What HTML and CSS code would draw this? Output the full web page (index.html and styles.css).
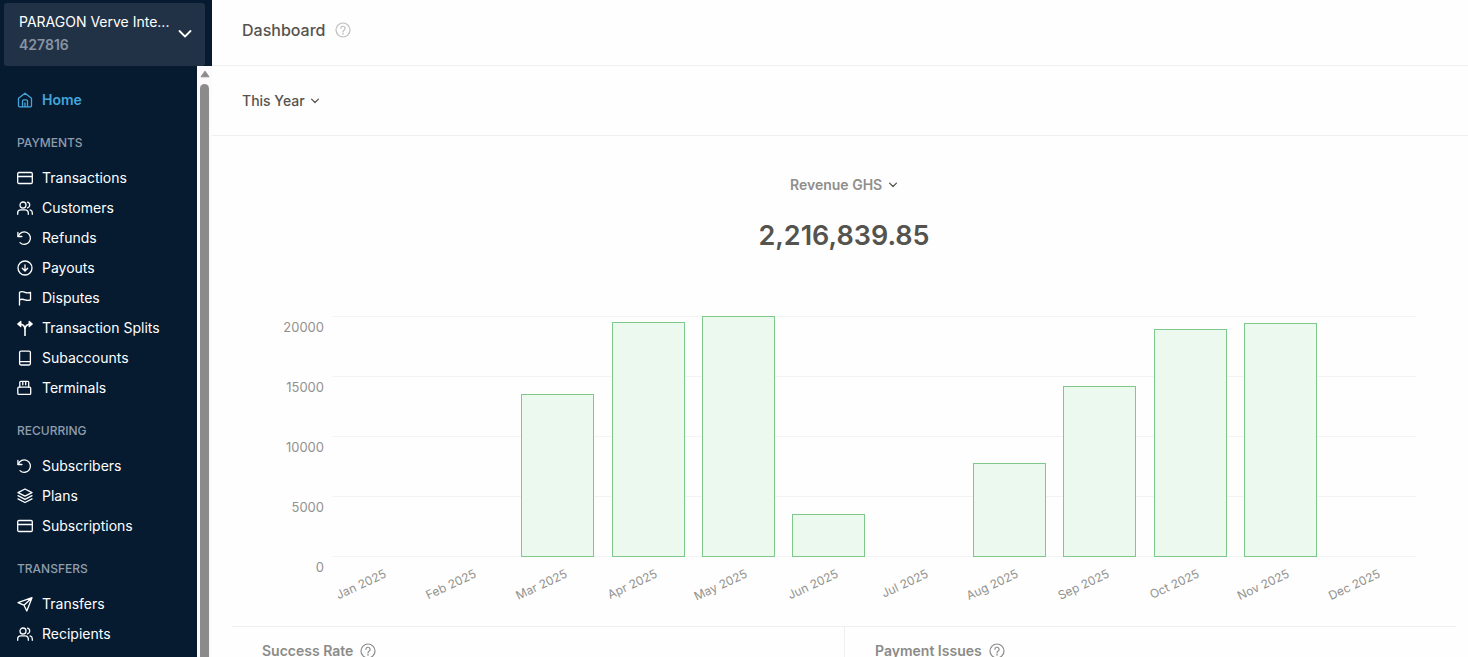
FILE: index.html
```html
<!DOCTYPE html>
<html lang="en">
<head>
    <meta charset="UTF-8">
    <meta name="viewport" content="width=device-width, initial-scale=1.0">
    <title>Dashboard</title>
    <link rel="stylesheet" href="styles.css">
</head>
<body>

    <!-- Shared icons -->
    <svg class="sprite" aria-hidden="true">
        <symbol id="home" viewBox="0 0 16 16"><path d="M1.5 6.2 8 1.2l6.500 5v7.300a1.300 1.300 0 0 1-1.300 1.300H2.800a1.300 1.300 0 0 1-1.300-1.300z"/><path d="M5.500 14.500V9a1.200 1.200 0 0 1 1.200-1.200h2.600A1.200 1.200 0 0 1 10.500 9v5.500M8 11v3.500"/></symbol>
        <symbol id="card" viewBox="0 0 16 16"><rect x=".7" y="2.500" width="14.600" height="11" rx="1.200"/><path d="M.7 6.500h14.600"/></symbol>
        <symbol id="users" viewBox="0 0 16 16"><circle cx="6" cy="5" r="3"/><path d="M.7 14.300v-1.500a3 3 0 0 1 3-3h4.600a3 3 0 0 1 3 3v1.500M10.500 2.100a3 3 0 0 1 0 5.800M15.300 14.300v-1.500a3 3 0 0 0-2.200-2.900"/></symbol>
        <symbol id="undo" viewBox="0 0 16 16"><path d="M.9 2.500v4h4"/><path d="M1.300 6.300A6.200 6.200 0 1 1 3 12.600"/></symbol>
        <symbol id="payout" viewBox="0 0 16 16"><circle cx="8" cy="8" r="7"/><path d="M8 4.800v6M5.300 8.300 8 11l2.700-2.700"/></symbol>
        <symbol id="flag" viewBox="0 0 16 16"><path d="M2.500 15V2.300c2-1 3.600-.7 5.500 0s3.500.7 5.500 0v7.500c-2 .8-3.600.7-5.500 0s-3.500-.9-5.500 0"/></symbol>
        <symbol id="split" viewBox="0 0 16 16"><path d="M8 15.500V9.500C8 6 6 4 2 4M8 9.500C8 6 10 4 14 4" stroke-width="1.600"/><path d="M3.800 1.500.8 4l3 2.500zM12.200 1.500l3 2.500-3 2.500z" class="solid"/></symbol>
        <symbol id="book" viewBox="0 0 16 16"><rect x="2.600" y="1.200" width="10.800" height="13.800" rx="1.400"/><path d="M2.600 11.600h10.800"/></symbol>
        <symbol id="terminal" viewBox="0 0 16 16"><rect x=".8" y="7.200" width="12.900" height="7.200" rx="1"/><path d="M2.800 7V2.200a.8.800 0 0 1 .8-.8h7.300a.8.800 0 0 1 .8.800V7M5.800 1.500v3.300M8.700 1.500v3.300"/></symbol>
        <symbol id="layers" viewBox="0 0 16 16"><path d="M8 1 1 4.600l7 3.600 7-3.600zM1 7.700l7 3.600 7-3.600M1 10.900l7 3.600 7-3.600"/></symbol>
        <symbol id="send" viewBox="0 0 16 16"><path d="M15 1.700 9.800 15 7 9.200 1 6.600zM15 1.700l-8 7.500"/></symbol>
        <symbol id="chevron" viewBox="0 0 16 16"><path d="M2.500 5 8 10.500 13.500 5"/></symbol>
        <symbol id="help" viewBox="0 0 16 16"><circle cx="8" cy="8" r="7"/><path d="M5.900 6.300a2.100 2.100 0 1 1 3.100 1.900c-.7.400-1 .7-1 1.500M8 11.200v1"/></symbol>
    </svg>

    <aside class="sidebar">
        <button class="account" type="button">
            <span class="account-text">
                <span class="account-name">PARAGON Verve Inte...</span>
                <span class="account-id">427816</span>
            </span>
            <svg class="icon account-arrow"><use href="#chevron"/></svg>
        </button>
        <div class="sidebar-body">
            <nav class="menu">
                <a class="menu-item active" href="#"><svg class="icon"><use href="#home"/></svg>Home</a>

                <h2 class="menu-title">Payments</h2>
                <a class="menu-item" href="#"><svg class="icon"><use href="#card"/></svg>Transactions</a>
                <a class="menu-item" href="#"><svg class="icon"><use href="#users"/></svg>Customers</a>
                <a class="menu-item" href="#"><svg class="icon"><use href="#undo"/></svg>Refunds</a>
                <a class="menu-item" href="#"><svg class="icon"><use href="#payout"/></svg>Payouts</a>
                <a class="menu-item" href="#"><svg class="icon"><use href="#flag"/></svg>Disputes</a>
                <a class="menu-item" href="#"><svg class="icon"><use href="#split"/></svg>Transaction Splits</a>
                <a class="menu-item" href="#"><svg class="icon"><use href="#book"/></svg>Subaccounts</a>
                <a class="menu-item" href="#"><svg class="icon"><use href="#terminal"/></svg>Terminals</a>

                <h2 class="menu-title">Recurring</h2>
                <a class="menu-item" href="#"><svg class="icon"><use href="#undo"/></svg>Subscribers</a>
                <a class="menu-item" href="#"><svg class="icon"><use href="#layers"/></svg>Plans</a>
                <a class="menu-item" href="#"><svg class="icon"><use href="#card"/></svg>Subscriptions</a>

                <h2 class="menu-title">Transfers</h2>
                <a class="menu-item" href="#"><svg class="icon"><use href="#send"/></svg>Transfers</a>
                <a class="menu-item" href="#"><svg class="icon"><use href="#users"/></svg>Recipients</a>
            </nav>
            <div class="scrollbar">
                <svg class="scroll-up" viewBox="0 0 10 8"><path d="M5 1.200 9 6.800H1z"/></svg>
                <div class="scroll-thumb"></div>
            </div>
        </div>
    </aside>

    <main class="content">
        <header class="page-header">
            <h1>Dashboard</h1>
            <svg class="icon help light"><use href="#help"/></svg>
        </header>

        <div class="filters">
            <label class="picker">
                <select aria-label="Period">
                    <option>This Year</option>
                </select>
                <svg class="icon picker-arrow"><use href="#chevron"/></svg>
            </label>
        </div>

        <section class="revenue">
            <label class="picker muted">
                <select aria-label="Metric">
                    <option>Revenue GHS</option>
                </select>
                <svg class="icon picker-arrow"><use href="#chevron"/></svg>
            </label>
            <p class="total">2,216,839.85</p>

            <div class="chart">
                <div class="axis-y">
                    <span>20000</span>
                    <span>15000</span>
                    <span>10000</span>
                    <span>5000</span>
                    <span>0</span>
                </div>
                <div class="plot">
                    <div class="bars">
                        <div class="slot"></div>
                        <div class="slot"></div>
                        <div class="slot"><div class="bar" style="height: 67.6%"></div></div>
                        <div class="slot"><div class="bar" style="height: 97.6%"></div></div>
                        <div class="slot"><div class="bar" style="height: 100%"></div></div>
                        <div class="slot"><div class="bar" style="height: 17.8%"></div></div>
                        <div class="slot"></div>
                        <div class="slot"><div class="bar" style="height: 39.2%"></div></div>
                        <div class="slot"><div class="bar" style="height: 71%"></div></div>
                        <div class="slot"><div class="bar" style="height: 94.6%"></div></div>
                        <div class="slot"><div class="bar" style="height: 97.3%"></div></div>
                        <div class="slot"></div>
                    </div>
                    <div class="axis-x">
                        <span>Jan 2025</span>
                        <span>Feb 2025</span>
                        <span>Mar 2025</span>
                        <span>Apr 2025</span>
                        <span>May 2025</span>
                        <span>Jun 2025</span>
                        <span>Jul 2025</span>
                        <span>Aug 2025</span>
                        <span>Sep 2025</span>
                        <span>Oct 2025</span>
                        <span>Nov 2025</span>
                        <span>Dec 2025</span>
                    </div>
                </div>
            </div>
        </section>

        <div class="stats">
            <section class="stat">
                <h2>Success Rate</h2>
                <svg class="icon help"><use href="#help"/></svg>
            </section>
            <section class="stat">
                <h2>Payment Issues</h2>
                <svg class="icon help"><use href="#help"/></svg>
            </section>
        </div>
    </main>

</body>
</html>
```

FILE: styles.css
```css
* {
    box-sizing: border-box;
}

body {
    font-family: Inter, "Liberation Sans", sans-serif;
    font-size: 14px;
    line-height: 20px;
    background-color: #fefefe;
    color: #55534e;
    margin: 0;
    display: flex;
    height: 100vh;
    overflow: hidden;
}

h1, h2, p {
    margin: 0;
}

.sprite {
    position: absolute;
    width: 0;
    height: 0;
}

.icon {
    width: 16px;
    height: 16px;
    flex: none;
    fill: none;
    stroke: currentColor;
    stroke-width: 1.3;
    stroke-linecap: round;
    stroke-linejoin: round;
}

.solid {
    fill: currentColor;
}

/* Sidebar */
.sidebar {
    width: 212px;
    flex: none;
    display: flex;
    flex-direction: column;
    background-color: #061b30;
}

.account {
    display: flex;
    align-items: center;
    justify-content: space-between;
    margin: 3px 7px 0 4px;
    padding: 9px 12px 11px 15px;
    border: none;
    border-radius: 3px;
    background-color: #223246;
    color: #fff;
    font: inherit;
    text-align: left;
    cursor: pointer;
}

.account-text {
    display: flex;
    flex-direction: column;
    gap: 3px;
}

.account-name {
    white-space: nowrap;
}

.account-id {
    font-weight: 600;
    color: #8894a3;
}

.account-arrow {
    stroke-width: 1.8;
}

.sidebar-body {
    flex: 1;
    min-height: 0;
    display: flex;
}

.menu {
    flex: 1;
    padding: 19px 0 0 17px;
    overflow: hidden;
}

.menu-item {
    display: flex;
    align-items: center;
    gap: 9px;
    height: 30px;
    color: #fff;
    text-decoration: none;
}

.menu-item.active {
    color: #44a6dd;
    font-weight: 600;
}

.menu-title {
    padding: 20px 0 12px;
    font-size: 12px;
    line-height: 16px;
    font-weight: 500;
    text-transform: uppercase;
    color: #8f9dac;
}

.scrollbar {
    width: 15px;
    display: flex;
    flex-direction: column;
    align-items: center;
    padding-top: 4px;
    gap: 6px;
    background-color: #fcfafc;
}

.scroll-up {
    width: 10px;
    height: 8px;
    flex: none;
    fill: #8b8b8b;
    stroke: #8b8b8b;
    stroke-linejoin: round;
}

.scroll-thumb {
    flex: 1;
    width: 9px;
    border-radius: 5px 5px 0 0;
    background-color: #8b8b8b;
}

/* Main content */
.content {
    flex: 1;
    min-width: 0;
}

.page-header,
.filters {
    display: flex;
    align-items: center;
    padding: 0 30px;
    border-bottom: 1px solid #efefef;
}

.page-header {
    gap: 10px;
    height: 66px;
    padding-bottom: 5px;
}

.page-header h1 {
    font-size: 16px;
    font-weight: 500;
}

.filters {
    height: 70px;
}

.help {
    stroke-width: 1.2;
    color: #8b8b88;
}

.help.light {
    color: #bdbdbb;
}

.picker {
    display: inline-flex;
    align-items: center;
    gap: 5px;
}

.picker select {
    appearance: none;
    border: none;
    padding: 0;
    background: none;
    color: inherit;
    font: inherit;
    font-weight: 500;
    cursor: pointer;
}

.picker.muted select {
    color: #8f8e8b;
    font-weight: 600;
}

.picker-arrow {
    width: 10px;
    height: 10px;
    stroke-width: 2;
}

/* Revenue */
.revenue {
    margin: 0 12px 0 20px;
    padding-top: 39px;
    border-bottom: 1px solid #efefef;
    text-align: center;
}

.total {
    margin-top: 21px;
    font-size: 27px;
    line-height: 40px;
    font-weight: 600;
}

.chart {
    display: flex;
    padding: 60px 40px 0 0;
    font-size: 13px;
    color: #93928f;
}

.axis-y {
    width: 100px;
    flex: none;
    display: flex;
    flex-direction: column;
    gap: 40px;
    padding: 1px 8px 0 0;
    text-align: right;
}

.plot {
    flex: 1;
    min-width: 0;
}

.bars {
    display: flex;
    height: 241px;
    background: repeating-linear-gradient(#f3f3f3 0 1px, transparent 1px 60px);
}

.slot {
    flex: 1;
    display: flex;
    align-items: flex-end;
    justify-content: center;
}

.bar {
    width: 81%;
    border: 1px solid #7dc88a;
    background-color: #ebf9ee;
}

.axis-x {
    display: flex;
    padding: 10px 0 39px;
    font-size: 12px;
}

.axis-x span {
    flex: 1;
    min-width: 0;
    display: flex;
    justify-content: flex-end;
    padding-right: 36px;
    white-space: nowrap;
    transform: rotate(-25deg);
}

/* Bottom stats */
.stats {
    display: grid;
    grid-template-columns: 1fr 1fr;
    margin: 0 12px 0 20px;
}

.stat {
    display: flex;
    align-items: center;
    gap: 7px;
    padding: 14px 30px 60px;
    color: #8b8b88;
}

.stat + .stat {
    border-left: 1px solid #efefef;
}

.stat h2 {
    font-size: 14px;
    font-weight: 600;
}
```
